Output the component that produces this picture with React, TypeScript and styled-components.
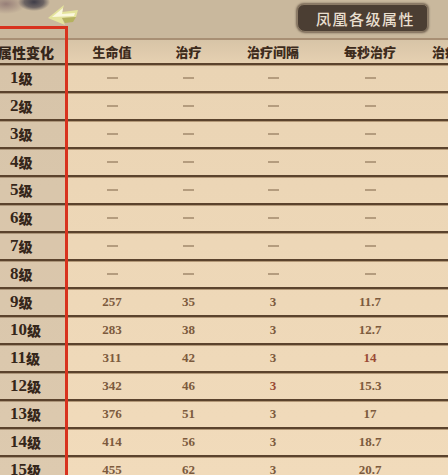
import styled, { createGlobalStyle } from 'styled-components';

const GlobalStyle = createGlobalStyle`
  html, body {
    margin: 0;
    padding: 0;
    background: #cdbb9f;
  }
`;

const COLUMNS = '65px 94px 59px 110px 84px 66px';

interface LevelRow {
  level: number;
  values?: string[];
}

const rows: LevelRow[] = [
  { level: 1 },
  { level: 2 },
  { level: 3 },
  { level: 4 },
  { level: 5 },
  { level: 6 },
  { level: 7 },
  { level: 8 },
  { level: 9, values: ['257', '35', '3', '11.7'] },
  { level: 10, values: ['283', '38', '3', '12.7'] },
  { level: 11, values: ['311', '42', '3', '14'] },
  { level: 12, values: ['342', '46', '3', '15.3'] },
  { level: 13, values: ['376', '51', '3', '17'] },
  { level: 14, values: ['414', '56', '3', '18.7'] },
  { level: 15, values: ['455', '62', '3', '20.7'] }
];

const headers = ['生命值', '治疗', '治疗间隔', '每秒治疗', '治疗'];

const Page = styled.div({
  position: 'relative',
  width: '448px',
  height: '475px',
  overflow: 'hidden',
  display: 'flex',
  flexDirection: 'column',
  background: 'linear-gradient(180deg, #c8b79c 0px, #d6c3a6 38px, #ead4b4 70px, #f1dbbb 100%)',
  fontFamily: '"Liberation Serif", "Noto Sans CJK SC", serif'
});

const TopBar = styled.div({
  height: '38px',
  flexShrink: 0,
  display: 'flex',
  alignItems: 'flex-start',
  justifyContent: 'space-between',
  padding: '0 20px 0 0',
  boxSizing: 'border-box',
  background:
    'radial-gradient(ellipse 16px 9px at 34px 2px, #3f3d48 0, rgba(70,65,75,0.7) 60%, rgba(90,80,80,0) 100%), radial-gradient(ellipse 20px 10px at 6px 4px, rgba(110,80,90,0.55) 0, rgba(110,80,90,0) 100%), #c9b89d'
});

const ArrowWrap = styled.div({
  marginLeft: '46px',
  marginTop: '3px'
});

const TitleBadge = styled.div({
  marginTop: '4px',
  height: '26px',
  padding: '0 12px 0 18px',
  display: 'flex',
  alignItems: 'center',
  background: '#4b3e33',
  border: '1px solid #8c7b66',
  borderRadius: '7px 5px 6px 8px',
  boxShadow: '0 0 2px 1px rgba(60,45,35,0.6)',
  color: '#e9dfcf',
  fontFamily: '"Noto Sans CJK SC", sans-serif',
  fontSize: '15px',
  fontWeight: 500,
  letterSpacing: '1.5px'
});

const Row = styled.div<{ $header?: boolean }>(({ $header }) => ({
  display: 'grid',
  gridTemplateColumns: COLUMNS,
  height: $header ? '27px' : '28px',
  flexShrink: 0,
  boxSizing: 'border-box',
  borderTop: $header ? '2px solid #a88f74' : 'none',
  borderBottom: '2px solid #5b432d',
  boxShadow: '0 1px 0 #b39877'
}));

const LevelCell = styled.div<{ $header?: boolean }>(({ $header }) => ({
  display: 'flex',
  alignItems: 'center',
  justifyContent: $header ? 'flex-end' : 'flex-start',
  paddingLeft: $header ? 0 : '10px',
  paddingRight: $header ? '11px' : 0,
  background: 'rgba(150,140,130,0.22)',
  color: '#35261a',
  fontWeight: 700,
  fontSize: $header ? '14px' : '16px',
  whiteSpace: 'nowrap',
  overflow: 'visible'
}));

const HeaderLabel = styled.span({
  fontFamily: '"Noto Sans CJK SC", sans-serif',
  fontWeight: 900
});

const HeadCell = styled.div({
  display: 'flex',
  alignItems: 'center',
  justifyContent: 'center',
  color: '#3d2b1c',
  fontFamily: '"Noto Sans CJK SC", sans-serif',
  fontWeight: 900,
  fontSize: '13px',
  whiteSpace: 'nowrap'
});

const ValueCell = styled.div<{ $red?: boolean }>(({ $red }) => ({
  display: 'flex',
  alignItems: 'center',
  justifyContent: 'center',
  color: $red ? '#9a4a34' : '#7c5a3d',
  fontWeight: 700,
  fontSize: '13px'
}));

const Dash = styled.span({
  display: 'block',
  width: '11px',
  height: '1.5px',
  background: '#b49c7e'
});

const LevelNum = styled.span({
  fontFamily: '"Liberation Serif", serif',
  fontSize: '17px'
});

const LevelChar = styled.span({
  fontFamily: '"Noto Sans CJK SC", sans-serif',
  fontSize: '14px',
  fontWeight: 900
});

const RedFrame = styled.div({
  position: 'absolute',
  left: '-6px',
  top: '26px',
  width: '68px',
  height: '480px',
  border: '3px solid #d8321e',
  pointerEvents: 'none'
});

function Arrow() {
  return (
    <svg width='34' height='24' viewBox='0 0 34 24'>
      <path d='M2 15 L18 2 L16 9 L32 7 L30 14 L16 15 L19 22 Z' fill='#e4e39c' />
      <path d='M6 14 L17 5 L16 11 L29 10 L28 13 Z' fill='#fbf8dc' />
      <path d='M16 15 L30 14 L27 19 L19 20 Z' fill='#b0b050' opacity='0.8' />
    </svg>
  );
}

export default function App() {
  return (
    <>
      <GlobalStyle />
      <Page>
        <TopBar>
          <ArrowWrap>
            <Arrow />
          </ArrowWrap>
          <TitleBadge>凤凰各级属性</TitleBadge>
        </TopBar>
        <Row $header>
          <LevelCell $header>
            <HeaderLabel>属性变化</HeaderLabel>
          </LevelCell>
          {headers.map((h, i) => (
            <HeadCell key={i}>{h}</HeadCell>
          ))}
        </Row>
        {rows.map((row) => (
          <Row key={row.level}>
            <LevelCell>
              <LevelNum>{row.level}</LevelNum>
              <LevelChar>级</LevelChar>
            </LevelCell>
            {[0, 1, 2, 3].map((i) => (
              <ValueCell key={i} $red={row.values ? (row.level === 12 && i === 2) || (row.level === 11 && i === 3) : false}>
                {row.values ? row.values[i] : <Dash />}
              </ValueCell>
            ))}
            <ValueCell />
          </Row>
        ))}
        <RedFrame />
      </Page>
    </>
  );
}
